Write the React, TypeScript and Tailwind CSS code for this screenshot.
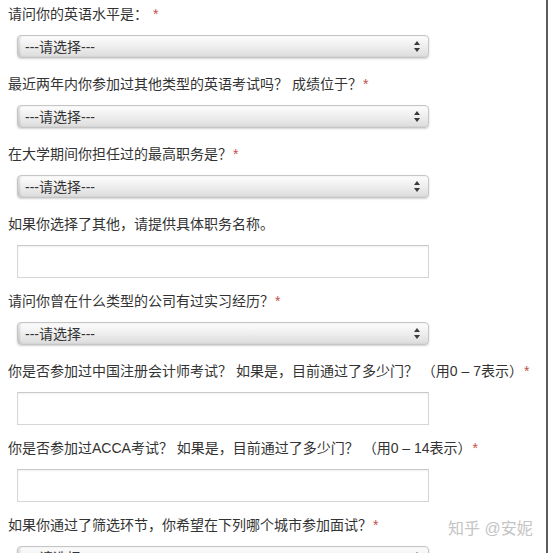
import React from "react";

const FONT = { fontFamily: '"Liberation Sans", "Noto Sans CJK SC", sans-serif' };

function Label({ text, required = true }: { text: string; required?: boolean }) {
  return (
    <div className="pl-[8px] h-5 leading-5 text-[14px] text-[#333] whitespace-nowrap">
      {text}
      {required && <span className="text-[#c0504d] ml-[1px]">*</span>}
    </div>
  );
}

function Select() {
  return (
    <div className="ml-[17px] mt-[11px] mb-[16px] w-[412px] h-[23px] rounded-[4px] border border-[#c6c6c6] bg-linear-to-b from-[#fdfdfd] via-[#eeeeee] to-[#dcdcdc] shadow-[inset_2px_0_2px_rgba(0,0,0,0.12),0_1px_2px_rgba(0,0,0,0.18)] flex items-center justify-between pl-[7px] pr-[8px]">
      <span className="text-[14px] text-[#333] leading-none">---请选择---</span>
      <svg width="6" height="11" viewBox="0 0 6 11">
        <polygon points="0,4 3,0 6,4" fill="#3a3a3a" />
        <polygon points="0,7 3,11 6,7" fill="#3a3a3a" />
      </svg>
    </div>
  );
}

function Input() {
  return (
    <div className="ml-[17px] mt-[11px] mb-[13px] w-[412px] h-[33px] border border-[#d6d6d6] border-t-[#c9c9c9] bg-white shadow-[inset_0_1px_2px_rgba(0,0,0,0.06)]" />
  );
}

export default function App() {
  return (
    <div
      className="relative w-[548px] h-[553px] overflow-hidden bg-white border-r-2 border-[#5c5c5c] pt-[4px]"
      style={FONT}
    >
      <Label text="请问你的英语水平是： " />
      <Select />
      <Label text="最近两年内你参加过其他类型的英语考试吗？ 成绩位于？" />
      <Select />
      <Label text="在大学期间你担任过的最高职务是？" />
      <Select />
      <Label text="如果你选择了其他，请提供具体职务名称。" required={false} />
      <Input />
      <Label text="请问你曾在什么类型的公司有过实习经历？" />
      <Select />
      <Label text="你是否参加过中国注册会计师考试？ 如果是，目前通过了多少门？ （用0 – 7表示）" />
      <Input />
      <Label text="你是否参加过ACCA考试？ 如果是，目前通过了多少门？ （用0 – 14表示）" />
      <Input />
      <Label text="如果你通过了筛选环节，你希望在下列哪个城市参加面试？" />
      <Select />
      <div className="absolute left-[448px] top-[519px] text-[16px] leading-5 text-[#c4c4c4] whitespace-nowrap">
        知乎 @安妮
      </div>
    </div>
  );
}
